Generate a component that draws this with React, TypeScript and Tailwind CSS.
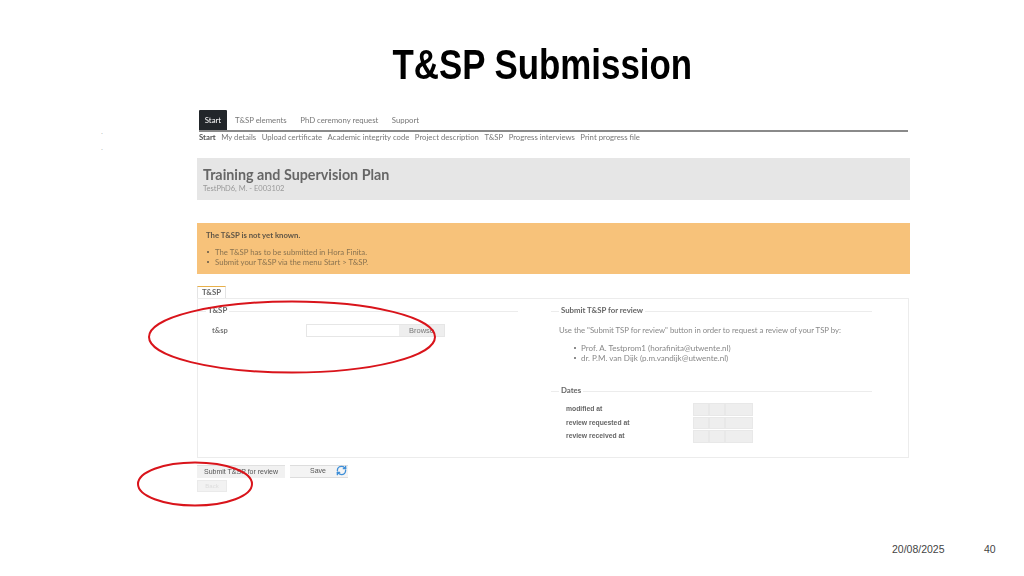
import { RefreshCw } from 'lucide-react';

const topTabs = ['T&SP elements', 'PhD ceremony request', 'Support'];
const subNav = ['My details', 'Upload certificate', 'Academic integrity code', 'Project description', 'T&SP', 'Progress interviews', 'Print progress file'];
const dateRows = ['modified at', 'review requested at', 'review received at'];

// fieldset style heading with a faint rule running after the label
const Legend = ({ label, className }: { label: string; className: string }) => (
  <div className={`flex items-center h-[12px] ${className}`}>
    <span className="w-[8px] h-px bg-[#ececec]" />
    <span className="px-[2px] text-[7.8px] font-bold text-[#666]">{label}</span>
    <span className="flex-1 h-px bg-[#ececec]" />
  </div>
);

const App = () => {
  return (
    <div className="relative w-[1024px] h-[576px] bg-white overflow-hidden font-['Liberation_Sans',sans-serif]">
      <h1 className="pt-[41px] h-[110px] pl-[73px] text-center text-[42px] leading-[48px] font-bold text-black scale-x-[0.83]">T&amp;SP Submission</h1>

      <div className="w-[713px] ml-[197px] font-['Lato',sans-serif] blur-[0.4px]">
        {/* top navigation */}
        <div className="flex items-end h-[22px] ml-[2px] w-[709px] border-b-2 border-[#8a8a8a]">
          <div className="w-[28px] h-[20px] bg-[#22262a] rounded-t-[1px] text-white text-[7.8px] leading-[20px] text-center">Start</div>
          <div className="flex gap-[13.5px] ml-[8px] h-[20px] pt-[1px] items-center text-[7.8px] text-[#777]">
            {topTabs.map(t => <span key={t}>{t}</span>)}
          </div>
        </div>
        <div className="flex gap-[5.5px] ml-[2px] h-[12px] items-center text-[7.75px] text-[#777]">
          <span className="font-bold text-[#555]">Start</span>
          {subNav.map(t => <span key={t}>{t}</span>)}
        </div>

        {/* page heading */}
        <div className="mt-[14px] h-[42px] bg-[#e6e6e6] px-[6px] pt-[8px]">
          <div className="text-[14.3px] leading-[18px] font-bold text-[#666]">Training and Supervision Plan</div>
          <div className="text-[7.5px] leading-[10px] text-[#999]">TestPhD6, M. - E003102</div>
        </div>

        {/* notice */}
        <div className="mt-[23px] h-[51px] bg-[#f7c27a] px-[9px] pt-[8px] text-[7.75px] text-[#8a7350]">
          <div className="font-bold leading-[9px] text-[#5f5546]">The T&amp;SP is not yet known.</div>
          <ul className="mt-[7px] leading-[10px]">
            <li className="flex items-center gap-[6px]"><span className="w-[2px] h-[2px] ml-[1px] rounded-full bg-[#5f5546]" />The T&amp;SP has to be submitted in Hora Finita.</li>
            <li className="flex items-center gap-[6px]"><span className="w-[2px] h-[2px] ml-[1px] rounded-full bg-[#5f5546]" />Submit your T&amp;SP via the menu Start &gt; T&amp;SP.</li>
          </ul>
        </div>

        {/* tab */}
        <div className="mt-[12px] w-[29px] h-[13px] border border-b-0 border-[#e4e4e4] border-t-[#e8b04a] text-[7.8px] leading-[11px] font-bold text-center text-[#666]">T&amp;SP</div>

        {/* tab panel */}
        <div className="h-[160px] w-[712px] -mt-px border border-[#ececec] flex pt-[6px]">
          <div className="w-[320px]">
            <Legend label="T&SP" className="w-[320px]" />
            <div className="flex items-center mt-[7px] ml-[14px]">
              <span className="w-[94px] text-[7.5px] font-bold text-[#777]">t&amp;sp</span>
              <div className="flex w-[139px] h-[13px] border border-[#e6e6e6]">
                <span className="w-[92px]" />
                <span className="flex-1 bg-[#eeeeee] text-[7.5px] leading-[11px] text-center text-[#777] font-['Liberation_Sans',sans-serif]">Browse</span>
              </div>
            </div>
          </div>

          <div className="w-[321px] ml-[33px]">
            <Legend label="Submit T&SP for review" className="w-[321px]" />
            <p className="mt-[8px] ml-[8px] text-[7.75px] leading-[10px] whitespace-nowrap text-[#888]">Use the "Submit TSP for review" button in order to request a review of your TSP by:</p>
            <ul className="mt-[8px] ml-[23px] text-[8.05px] leading-[10px] text-[#888]">
              <li className="flex items-center gap-[5px]"><span className="w-[2px] h-[2px] rounded-full bg-[#666]" />Prof. A. Testprom1 (horafinita@utwente.nl)</li>
              <li className="flex items-center gap-[5px]"><span className="w-[2px] h-[2px] rounded-full bg-[#666]" />dr. P.M. van Dijk (p.m.vandijk@utwente.nl)</li>
            </ul>
            <Legend label="Dates" className="w-[321px] mt-[22px]" />
            <div className="mt-[6px] flex flex-col gap-[1px]">
              {dateRows.map(r => (
                <div key={r} className="flex items-center h-[12.5px] ml-[15px]">
                  <span className="w-[127px] text-[6.8px] font-bold text-[#666] font-['Liberation_Sans',sans-serif]">{r}</span>
                  <span className="w-[16px] h-full bg-[#eeeeee] border border-[#e8e8e8]" />
                  <span className="w-[16px] h-full bg-[#eeeeee] border border-[#e8e8e8]" />
                  <span className="w-[28px] h-full bg-[#eeeeee] border border-[#e8e8e8]" />
                </div>
              ))}
            </div>
          </div>
        </div>

        {/* actions */}
        <div className="mt-[7px] flex gap-[5px] font-['Liberation_Sans',sans-serif] text-[7px] text-[#555]">
          <button className="w-[88px] h-[13px] bg-[#f1f1f1] border-t border-[#e0e0e0]">Submit T&amp;SP for review</button>
          <button className="relative w-[58px] h-[13px] bg-[#f4f4f4] border-t border-b border-[#dddddd] pr-[2px]">
            Save
            <RefreshCw className="absolute right-[1px] top-[-1px] w-[11px] h-[11px] text-[#3f8fd8]" strokeWidth={3} />
          </button>
        </div>
        <div className="mt-[2px] w-[30px] h-[12px] bg-[#f2f2f2] border border-[#eaeaea] text-[6px] leading-[10px] text-center text-[#ddd] font-['Liberation_Sans',sans-serif]">Back</div>
      </div>

      {/* hand drawn annotations over the screenshot */}
      <svg className="absolute inset-0 pointer-events-none" width="1024" height="576" viewBox="0 0 1024 576" fill="none">
        <ellipse cx="292" cy="337" rx="143" ry="35.5" stroke="#d9141b" strokeWidth="2" />
        <ellipse cx="195" cy="484" rx="57" ry="21.5" stroke="#d9141b" strokeWidth="2" />
      </svg>

      <span className="absolute left-[101px] top-[127px] text-[7px] text-[#999]">.</span>
      <span className="absolute left-[101px] top-[143px] text-[7px] text-[#999]">.</span>

      <span className="absolute left-[892px] top-[542px] text-[10.5px] text-[#444]">20/08/2025</span>
      <span className="absolute left-[984px] top-[542px] text-[10.5px] text-[#444]">40</span>
    </div>
  );
};

export default App;
